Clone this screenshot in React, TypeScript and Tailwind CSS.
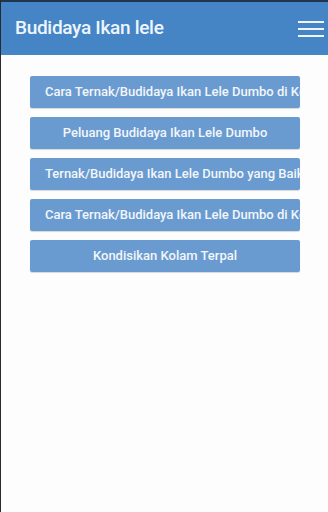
const items = [
  "Cara Ternak/Budidaya Ikan Lele Dumbo di Kolam Terpal",
  "Peluang Budidaya Ikan Lele Dumbo",
  "Ternak/Budidaya Ikan Lele Dumbo yang Baik dan Benar",
  "Cara Ternak/Budidaya Ikan Lele Dumbo di Kolam Tanah",
  "Kondisikan Kolam Terpal",
];

const App = () => {
  return (
    <div
      className="w-[328px] h-[512px] bg-[#fdfdfd] border-l border-[#2a2a2e] flex flex-col overflow-hidden"
      style={{ fontFamily: "Roboto, 'Noto Sans', sans-serif" }}
    >
      {/* Toolbar */}
      <div className="h-[55px] bg-[#4585c5] border-t-2 border-[#1f3550] flex items-center justify-between pl-[14px] pr-[4px] shrink-0">
        <h1 className="text-[19px] font-medium text-[#eef5fc] tracking-[-0.3px]">
          Budidaya Ikan lele
        </h1>
        <button className="w-[26px] h-[16px] flex flex-col justify-between">
          <span className="block h-[2px] w-full bg-[#eef5fc]" />
          <span className="block h-[2px] w-full bg-[#eef5fc]" />
          <span className="block h-[2px] w-full bg-[#eef5fc]" />
        </button>
      </div>

      {/* Article list */}
      <div className="flex flex-col gap-[9px] pt-[21px] pl-[29px]">
        {items.map((title) => (
          <button
            key={title}
            className="w-[270px] h-[32px] bg-[#6a9bd0] rounded-[2px] shadow-[0_1px_1px_rgba(0,0,0,0.15)] px-[15px] text-center text-[13px] font-medium text-[#f2f6fb] whitespace-nowrap overflow-hidden"
          >
            {title}
          </button>
        ))}
      </div>
    </div>
  );
};

export default App;
